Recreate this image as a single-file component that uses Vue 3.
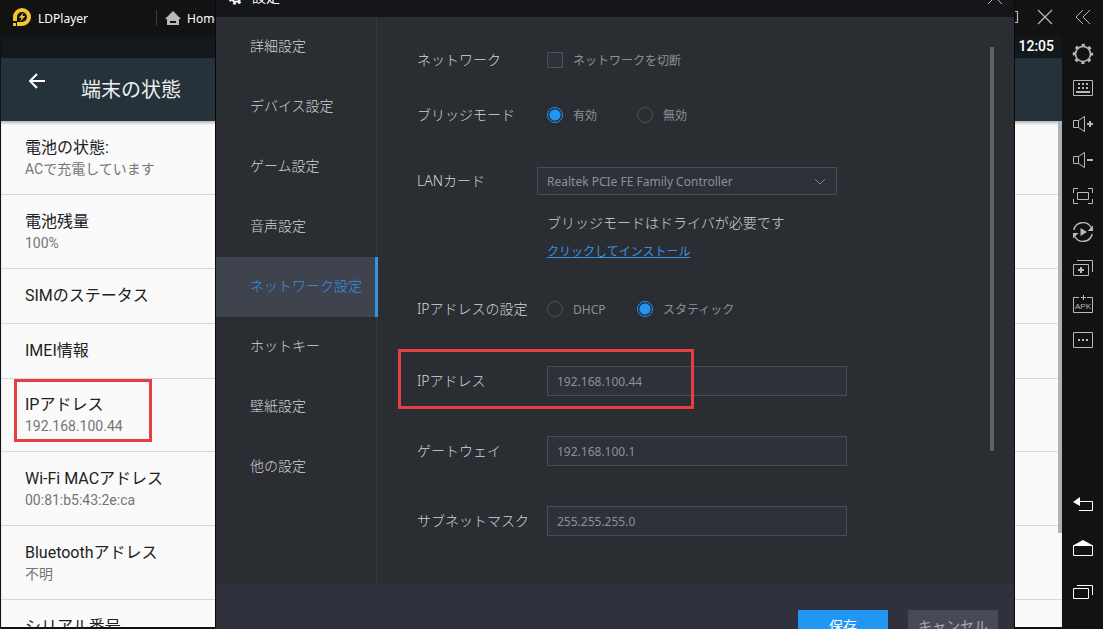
<script setup>
import { ref } from 'vue'

const status = [
  { title: '電池の状態:', sub: 'ACで充電しています' },
  { title: '電池残量', sub: '100%' },
  { title: 'SIMのステータス' },
  { title: 'IMEI情報' },
  { title: 'IPアドレス', sub: '192.168.100.44', marked: true },
  { title: 'Wi-Fi MACアドレス', sub: '00:81:b5:43:2e:ca' },
  { title: 'Bluetoothアドレス', sub: '不明' },
  { title: 'シリアル番号', sub: '不明' },
]

const tabs = [
  '詳細設定',
  'デバイス設定',
  'ゲーム設定',
  '音声設定',
  'ネットワーク設定',
  'ホットキー',
  '壁紙設定',
  '他の設定',
]
const activeTab = ref('ネットワーク設定')

const offline = ref(false)
const bridge = ref('on')
const card = ref('Realtek PCIe FE Family Controller')
const ipMode = ref('static')
const fields = ref([
  { id: 'ip', label: 'IPアドレス', value: '192.168.100.44', marked: true },
  { id: 'gateway', label: 'ゲートウェイ', value: '192.168.100.1' },
  { id: 'mask', label: 'サブネットマスク', value: '255.255.255.0' },
])
</script>

<template>
  <div class="emulator">
    <div class="screen">
      <header class="titlebar">
        <svg class="logo" viewBox="0 0 20 20" aria-hidden="true">
          <path d="M1 10V9a9 9 0 1 1 9 9H8v-4h2a5 5 0 1 0-5-5v4H1z" fill="#f5c52c" />
          <path d="M1 15h3v3H1zM5 14h3v4H5z" fill="#f5c52c" />
          <path d="M11.5 4.5 6.8 9.8h2.7L8.2 13.6l5-5.6h-2.8z" fill="#f5c52c" />
        </svg>
        <span class="brand">LDPlayer</span>
        <a class="home" href="#home">
          <svg viewBox="0 0 16 16" aria-hidden="true">
            <path d="M8 1 0 9h2v6h12V9h2zM5 11h6v2H5z" fill="#b9b9b9" fill-rule="evenodd" />
          </svg>
          <span>Home</span>
        </a>
        <div class="window-buttons">
          <button type="button" aria-label="最大化">
            <svg viewBox="0 0 16 16"><path d="M2.5 2.5h11v11h-11z" /></svg>
          </button>
          <button type="button" aria-label="閉じる">
            <svg viewBox="0 0 16 16"><path d="m1 1 14 14M15 1 1 15" /></svg>
          </button>
        </div>
      </header>
      <div class="statusbar">12:05</div>
      <div class="appbar">
        <button class="back" type="button" aria-label="戻る">
          <svg viewBox="0 0 18 18"><path d="M17 9H2M9 2 2 9l7 7" /></svg>
        </button>
        <h1>端末の状態</h1>
      </div>
      <div class="list-area">
        <ul class="list">
          <li v-for="row in status" :key="row.title" :class="{ short: !row.sub, marked: row.marked }">
            <span class="row-title">{{ row.title }}</span>
            <span v-if="row.sub" class="row-sub">{{ row.sub }}</span>
            <i v-if="row.marked" class="mark"></i>
          </li>
        </ul>
        <i class="list-scroll"></i>
      </div>
    </div>

    <nav class="tools" aria-label="ツール">
      <button class="collapse" type="button" aria-label="折りたたむ">
        <svg viewBox="0 0 24 24"><path d="m12 5-7 7 7 7M19 5l-7 7 7 7" /></svg>
      </button>
      <button type="button" aria-label="設定">
        <svg viewBox="0 -2 24 24">
          <circle cx="12" cy="12" r="7.5" stroke-width="1.6" />
          <circle cx="12" cy="12" r="9" stroke-width="2.4" stroke-dasharray="3.2 3.87" stroke-dashoffset="1.6" />
        </svg>
      </button>
      <button type="button" aria-label="キーボード">
        <svg viewBox="0 0 24 24">
          <path d="M2.5 4.5h19v15h-19z" />
          <path d="M5 16h14" stroke-width="2" />
          <path d="M7 8h2M11 8h2M15 8h2M7 12h2M11 12h2M15 12h2" stroke-width="2" />
        </svg>
      </button>
      <button type="button" aria-label="音量を上げる">
        <svg viewBox="0 0 24 24">
          <path d="M7.500 8.500h-5v7h5zM7.500 8.500l6-4v15l-6-4" />
          <path d="M16 12h6M19 9v6" stroke-width="2" />
        </svg>
      </button>
      <button type="button" aria-label="音量を下げる">
        <svg viewBox="0 0 24 24">
          <path d="M7.500 8.500h-5v7h5zM7.500 8.500l6-4v15l-6-4" />
          <path d="M16 12h6" stroke-width="2" />
        </svg>
      </button>
      <button type="button" aria-label="全画面">
        <svg viewBox="0 0 24 24">
          <path d="M7 4.500H2.500V9M17 4.500h4.500V9M2.500 15v4.500H7M21.500 15v4.500H17M6.500 8.500h11v7h-11z" />
        </svg>
      </button>
      <button type="button" aria-label="記録">
        <svg viewBox="0 0 24 24">
          <path d="M2.800 10a9.400 9.400 0 0 1 17.400-2.500M21.200 14A9.400 9.400 0 0 1 3.800 16.500" stroke-width="1.400" />
          <path d="M22 5.500V11h-5.500zM2 18.500V13h5.500zM9.500 8l6.500 4-6.500 4z" class="solid" />
        </svg>
      </button>
      <button type="button" aria-label="マルチ起動">
        <svg viewBox="0 0 24 24">
          <path d="M2.500 8.500h15v11h-15zM6 4.500h15.500V16" />
          <path d="M7 14h6M10 11v6" stroke-width="2" />
        </svg>
      </button>
      <button type="button" aria-label="APK">
        <svg viewBox="0 0 24 24">
          <path d="M8 5.500H2.500v15h19v-15H16M12.500 3v5M10 5.500h5" />
          <text x="12" y="17" text-anchor="middle">APK</text>
        </svg>
      </button>
      <button type="button" aria-label="その他">
        <svg viewBox="0 0 24 24">
          <path d="M2.500 4.500h19v15h-19z" />
          <path d="M7 12h2M11 12h2M15 12h2" stroke-width="2" />
        </svg>
      </button>
      <div class="nav-keys">
        <button type="button" aria-label="戻る">
          <svg viewBox="0 0 24 24">
            <path d="M8 9.500h13.500v9H8" />
            <path d="M2 10l7-5v9z" class="solid" />
          </svg>
        </button>
        <button type="button" aria-label="ホーム">
          <svg viewBox="0 0 24 24">
            <path d="M2.500 9.500h19v10h-19z" />
            <path d="M2 9.500 12 4l10 5.500z" class="solid" />
          </svg>
        </button>
        <button type="button" aria-label="履歴">
          <svg viewBox="0 0 24 24"><path d="M2.500 8.500h15v10h-15zM6 5.500h15.500V15" /></svg>
        </button>
      </div>
    </nav>

    <section class="dialog" role="dialog" aria-labelledby="dialog-title">
      <header class="dialog-head">
        <svg class="gear" viewBox="0 0 16 16" aria-hidden="true">
          <circle cx="8" cy="8" r="4.800" stroke-width="2" />
          <circle cx="8" cy="8" r="6.500" stroke-width="2.400" stroke-dasharray="2.700 2.400" />
        </svg>
        <h2 id="dialog-title">設定</h2>
        <button type="button" aria-label="設定を閉じる">
          <svg viewBox="0 0 16 16"><path d="m1 1 14 14M15 1 1 15" /></svg>
        </button>
      </header>

      <div class="dialog-body">
        <nav class="tabs" aria-label="設定項目">
          <button
            v-for="tab in tabs"
            :key="tab"
            type="button"
            :class="{ active: tab === activeTab }"
            @click="activeTab = tab"
          >{{ tab }}</button>
        </nav>

        <form class="form" @submit.prevent>
          <div class="row">
            <span class="label">ネットワーク</span>
            <label class="option"><input v-model="offline" type="checkbox" />ネットワークを切断</label>
          </div>
          <div class="row bridge" role="radiogroup" aria-label="ブリッジモード">
            <span class="label">ブリッジモード</span>
            <label class="option"><input v-model="bridge" type="radio" name="bridge" value="on" />有効</label>
            <label class="option"><input v-model="bridge" type="radio" name="bridge" value="off" />無効</label>
          </div>
          <div class="row lan">
            <label class="label" for="card">LANカード</label>
            <div class="select">
              <select id="card" v-model="card">
                <option>Realtek PCIe FE Family Controller</option>
              </select>
              <svg viewBox="0 0 12 8" aria-hidden="true"><path d="m1 1 5 5 5-5" /></svg>
            </div>
          </div>
          <div class="hint">
            <p>ブリッジモードはドライバが必要です</p>
            <a href="#install">クリックしてインストール</a>
          </div>
          <div class="row mode" role="radiogroup" aria-label="IPアドレスの設定">
            <span class="label">IPアドレスの設定</span>
            <label class="option"><input v-model="ipMode" type="radio" name="mode" value="dhcp" />DHCP</label>
            <label class="option"><input v-model="ipMode" type="radio" name="mode" value="static" />スタティック</label>
          </div>
          <div class="fields">
            <div v-for="field in fields" :key="field.id" class="row">
              <label class="label" :for="field.id">{{ field.label }}</label>
              <input :id="field.id" v-model="field.value" class="text" type="text" />
              <i v-if="field.marked" class="mark"></i>
            </div>
          </div>
        </form>
        <i class="form-scroll"></i>
      </div>

      <footer class="dialog-foot">
        <button class="save" type="button">保存</button>
        <button class="cancel" type="button">キャンセル</button>
      </footer>
    </section>
  </div>
</template>

<style>
html,
body {
  background: #121212;
  overflow: hidden;
}
</style>

<style scoped>
.emulator {
  position: relative;
  display: flex;
  height: 100vh;
  overflow: hidden;
  background: #121212;
  color: #fff;
  font-family: "Noto Sans", "Noto Sans CJK JP", sans-serif;
}
.emulator * {
  box-sizing: border-box;
}
button {
  padding: 0;
  border: 0;
  background: none;
  color: inherit;
  font: inherit;
}
svg {
  display: block;
  fill: none;
}
h1,
h2,
p,
ul {
  margin: 0;
  padding: 0;
  font-weight: 400;
}

/* Android screen */
.screen {
  flex: 1;
  display: flex;
  flex-direction: column;
  min-width: 0;
  padding: 0 0 2px 1px;
}
.titlebar {
  flex: none;
  display: flex;
  align-items: center;
  height: 36px;
  padding-left: 11px;
  font-size: 12px;
}
.logo {
  width: 20px;
  height: 20px;
}
.brand {
  width: 118px;
  margin-left: 6px;
}
.home {
  display: flex;
  align-items: center;
  gap: 6px;
  height: 16px;
  padding-left: 8px;
  border-left: 1px solid #3c3c3c;
  color: #fff;
  text-decoration: none;
}
.home svg {
  width: 16px;
  height: 16px;
}
.window-buttons {
  display: flex;
  gap: 17px;
  margin: 0 9px 2px auto;
}
.window-buttons svg {
  width: 16px;
  height: 16px;
  stroke: #b9b9b9;
  stroke-width: 1.2;
}
.statusbar {
  flex: none;
  height: 22px;
  padding-right: 8px;
  background: #12181c;
  text-align: right;
  font: 500 14px/20px Roboto, sans-serif;
}
.appbar {
  flex: none;
  display: flex;
  align-items: center;
  height: 63px;
  padding-left: 27px;
  background: #253239;
}
.back {
  align-self: flex-start;
  height: 46px;
}
.back svg {
  width: 18px;
  height: 18px;
  stroke: #fff;
  stroke-width: 2;
}
.appbar h1 {
  margin-left: 35px;
  font: 400 20px/28px Roboto, "Noto Sans CJK JP", sans-serif;
  color: #eceff1;
}
.list-area {
  position: relative;
  flex: 1;
  min-height: 0;
  overflow: hidden;
  background: #fafafa;
  box-shadow: inset 0 3px 3px -1px #b4b8ba;
}
.list {
  list-style: none;
  font-family: Roboto, "Noto Sans CJK JP", sans-serif;
}
.list li {
  position: relative;
  display: flex;
  flex-direction: column;
  justify-content: center;
  height: 74px;
  padding-left: 24px;
  border-bottom: 1px solid #d9d9d9;
}
.list li.marked {
  height: 73px;
}
.list li.short {
  height: 55px;
}
.row-title {
  font-size: 16px;
  line-height: 22px;
  color: #212121;
}
.row-sub {
  font-size: 14px;
  line-height: 20px;
  color: #757575;
}
.mark {
  position: absolute;
  border: 3px solid #e93e41;
  pointer-events: none;
}
.list .mark {
  top: 0;
  left: 13px;
  width: 138px;
  height: 63px;
}
.list-scroll {
  position: absolute;
  top: 0;
  right: 0;
  width: 4px;
  height: 412px;
  background: #b2b2b2;
}

/* Toolbar on the right */
.tools {
  flex: none;
  display: flex;
  flex-direction: column;
  width: 41px;
  padding-bottom: 15px;
}
.tools button {
  display: grid;
  place-items: center;
  flex: none;
  height: 36px;
}
.tools .collapse {
  height: 34px;
}
.tools svg {
  width: 24px;
  height: 24px;
  stroke: #b9b9b9;
}
.tools .solid {
  fill: #b9b9b9;
  stroke: none;
}
.tools text {
  fill: #b9b9b9;
  stroke: none;
  font: 8px "Liberation Sans", sans-serif;
}
.nav-keys {
  display: flex;
  flex-direction: column;
  margin-top: auto;
}
.nav-keys button {
  height: 44px;
}
.nav-keys svg {
  stroke: #fff;
}
.nav-keys .solid {
  fill: #fff;
}

/* Settings dialog */
.dialog {
  position: absolute;
  top: -20px;
  left: 215px;
  right: 88px;
  border: 1px solid #07080a;
  border-top: 0;
  background: #2a2d32;
  color: #d2d5d9;
  font-size: 14px;
}
.dialog-head {
  display: flex;
  align-items: center;
  height: 37px;
  padding: 0 11px 4px 12px;
  background: #15161a;
  color: #fff;
}
.dialog-head svg {
  width: 16px;
  height: 16px;
  stroke: #b9b9b9;
}
.dialog-head .gear {
  stroke: #fff;
}
.dialog-head h2 {
  margin-left: 8px;
  font-size: 14px;
  line-height: 20px;
}
.dialog-head button {
  margin-left: auto;
}
.dialog-body {
  position: relative;
  display: flex;
  height: 567px;
}
.tabs {
  flex: none;
  display: flex;
  flex-direction: column;
  width: 161px;
  border-right: 1px solid #34373c;
}
.tabs button {
  height: 60px;
  padding: 0 0 4px 34px;
  text-align: left;
  font-weight: 300;
}
.tabs .active {
  width: 162px;
  border-right: 3px solid #3593e0;
  background: #3f434d;
  color: #3593e0;
}
.form {
  flex: 1;
  padding: 28px 40px 0;
}
.row {
  position: relative;
  display: flex;
  align-items: center;
  height: 30px;
}
.label {
  flex: none;
  width: 130px;
  padding-bottom: 2px;
  font-weight: 300;
}
.option {
  display: flex;
  align-items: center;
  gap: 10px;
  min-width: 90px;
  color: #8d9095;
  font-size: 12px;
}
.option input {
  appearance: none;
  width: 16px;
  height: 16px;
  margin: 0;
  border: 1px solid #4d5057;
  background: #2f313b;
}
.option input[type="radio"] {
  border-radius: 50%;
  background: none;
}
.option input[type="radio"]:checked {
  border-color: #2196f3;
  background: radial-gradient(circle, #2196f3 5px, transparent 6px);
}
.bridge {
  margin-top: 25px;
}
.lan {
  height: 28px;
  margin-top: 37px;
}
.lan .label {
  width: 120px;
}
.select {
  position: relative;
  width: 300px;
  height: 28px;
}
.select select,
.text {
  width: 100%;
  height: 100%;
  padding: 0 9px;
  appearance: none;
  border: 1px solid #4a4d54;
  border-radius: 0;
  background: #2e303a;
  color: #8d9095;
  font: 12px "Noto Sans", "Noto Sans CJK JP", sans-serif;
}
.select svg {
  position: absolute;
  top: 11px;
  right: 11px;
  width: 12px;
  height: 8px;
  stroke: #7d8086;
}
.hint {
  display: flex;
  flex-direction: column;
  align-items: flex-start;
  gap: 10px;
  margin: 18px 0 0 130px;
}
.hint p {
  line-height: 20px;
  font-weight: 300;
}
.hint a {
  color: #3593e0;
  font-size: 12px;
  line-height: 18px;
}
.mode {
  margin-top: 33px;
}
.fields {
  display: flex;
  flex-direction: column;
  gap: 40px;
  margin-top: 42px;
}
.text {
  width: 300px;
}
.fields .mark {
  top: -17px;
  left: -19px;
  width: 296px;
  height: 60px;
}
.form-scroll {
  position: absolute;
  top: 30px;
  right: 20px;
  width: 4px;
  height: 404px;
  background: #5d6065;
}
.dialog-foot {
  display: flex;
  justify-content: flex-end;
  gap: 20px;
  padding: 26px 16px;
  background: #2f313c;
}
.dialog-foot button {
  width: 90px;
  height: 30px;
}
.dialog-foot .save {
  background: #2196f3;
  color: #fff;
}
.dialog-foot .cancel {
  background: #474a54;
  color: #a9acb2;
}
</style>
